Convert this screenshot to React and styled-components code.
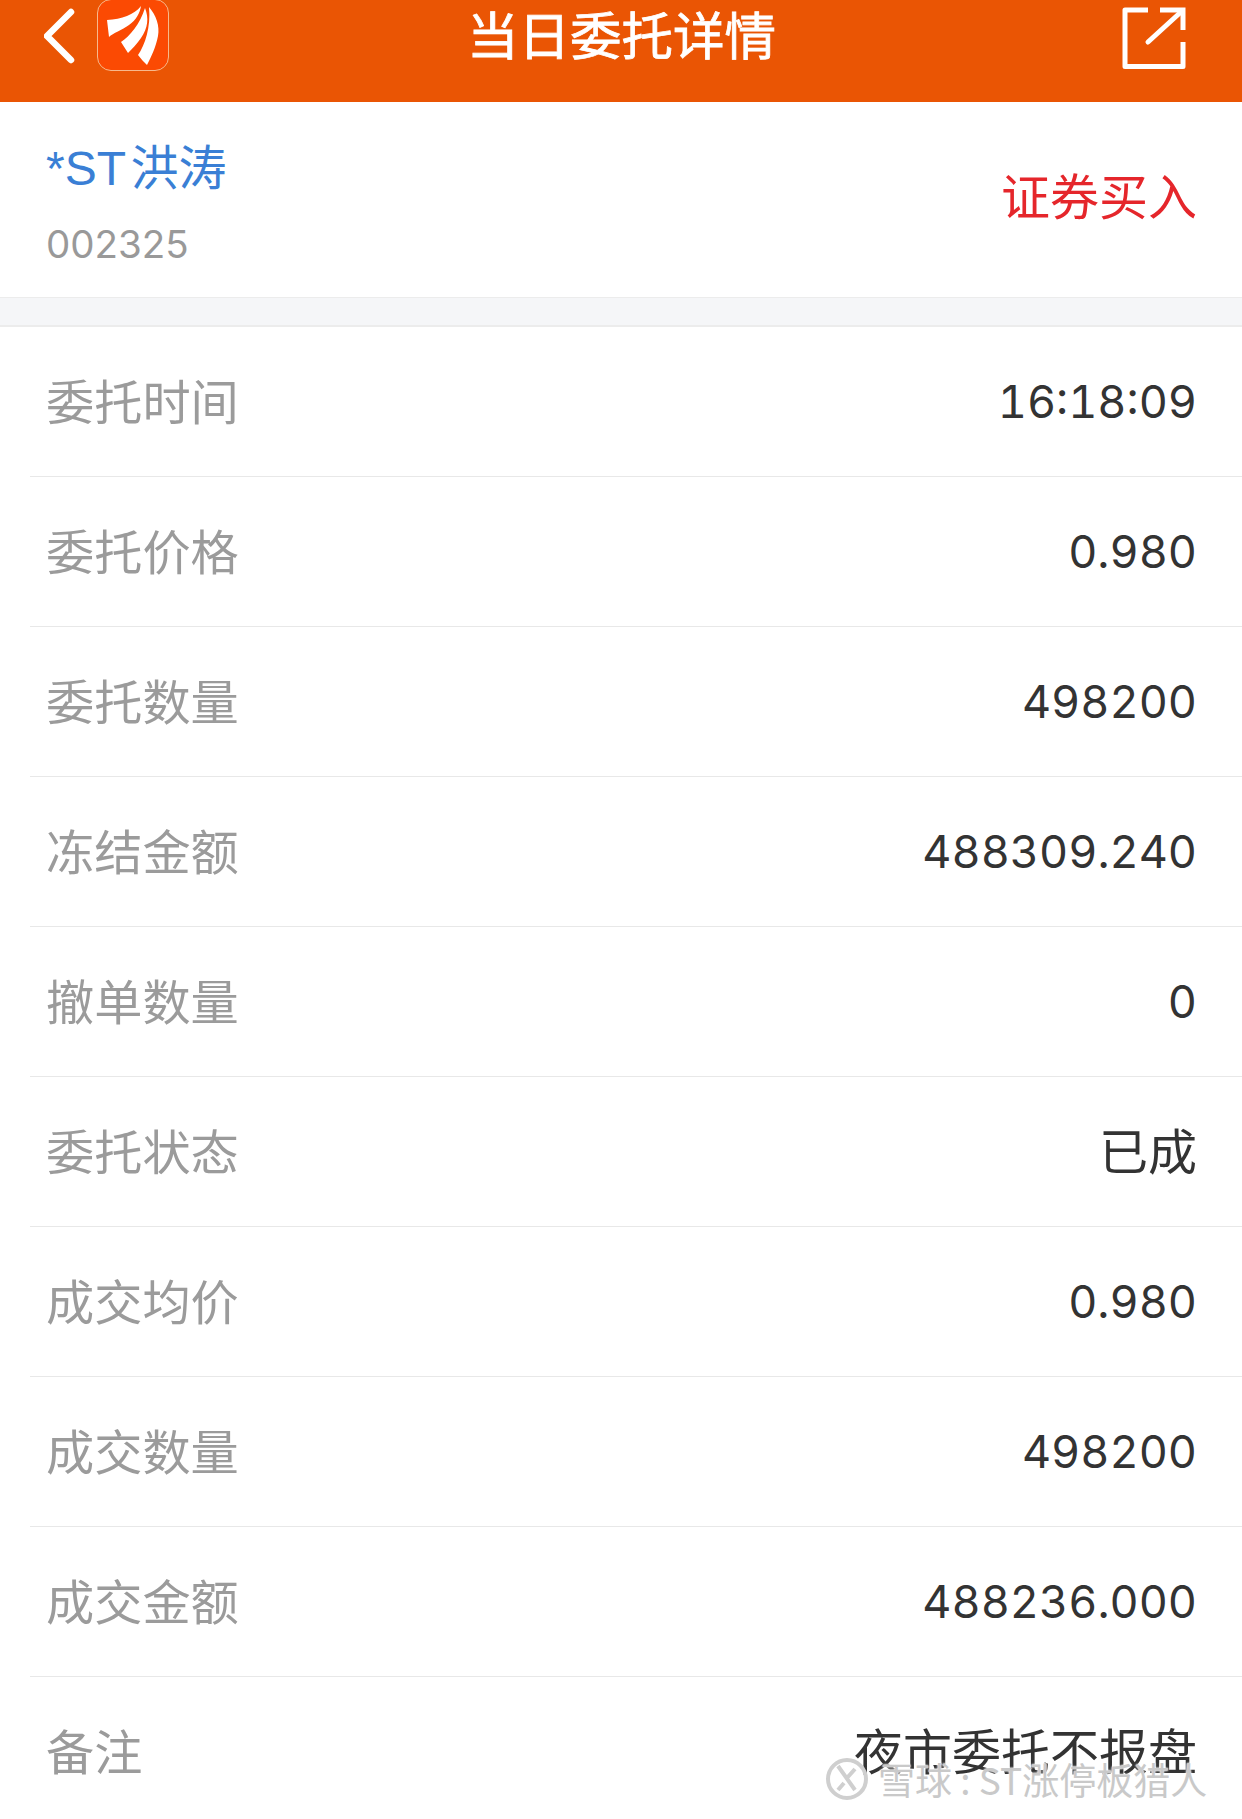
import styled, { createGlobalStyle } from 'styled-components';

const rows = [
  { label: '委托时间', value: '16:18:09' },
  { label: '委托价格', value: '0.980' },
  { label: '委托数量', value: '498200' },
  { label: '冻结金额', value: '488309.240' },
  { label: '撤单数量', value: '0' },
  { label: '委托状态', value: '已成', cjk: true },
  { label: '成交均价', value: '0.980' },
  { label: '成交数量', value: '498200' },
  { label: '成交金额', value: '488236.000' },
  { label: '备注', value: '夜市委托不报盘', cjk: true },
];

const App = () => {
  return (
    <Page>
      <GlobalStyle />
      <Header>
        <HeaderLeft>
          <svg width="32" height="56" viewBox="0 0 32 56" fill="none">
            <path d="M27 4 L3 28 L27 52" stroke="#fff" strokeWidth="6.5" strokeLinecap="round" strokeLinejoin="round" />
          </svg>
          <AppLogo>
            <svg width="70" height="70" viewBox="0 0 70 70">
              <path d="M9 20 C24 19 36 15 43 6 C42 13 38 20 31 25 C24 30 15 33 11 37 Z" fill="#fff" />
              <path d="M23 42 C32 36 42 24 47 8 C51 18 50 28 43 38 C39 44 34 49 30 53 Z" fill="#fff" />
              <path d="M40 55 C47 45 53 27 51 7 C58 15 62 26 60 36 C58 47 53 57 49 65 C46 62 43 59 40 55 Z" fill="#fff" />
            </svg>
          </AppLogo>
        </HeaderLeft>
        <Title>当日委托详情</Title>
        <ShareIcon>
          <svg width="66" height="68" viewBox="0 0 66 68" fill="none" stroke="#fff" strokeWidth="5">
            <path d="M26 9 H3 V65.5 H61 V41" strokeLinejoin="round" />
            <path d="M38 9 H61 V29" />
            <path d="M26 41 L60 10" strokeLinecap="round" />
          </svg>
        </ShareIcon>
      </Header>

      <StockBlock>
        <StockInfo>
          <StockName>*ST 洪涛</StockName>
          <StockCode>002325</StockCode>
        </StockInfo>
        <TradeType>证券买入</TradeType>
      </StockBlock>

      <Gap />

      <List>
        {rows.map((row) => (
          <Row key={row.label}>
            <Label>{row.label}</Label>
            <Value $cjk={row.cjk}>{row.value}</Value>
          </Row>
        ))}
      </List>

      <Watermark>
        <svg width="46" height="46" viewBox="0 0 46 46" fill="none" stroke="#cfcfcf" strokeWidth="4">
          <circle cx="23" cy="23" r="19" />
          <path d="M14 10 L31 34 M31 13 L22 23 M14 34 L20 27" />
        </svg>
        <span>雪球 : ST涨停板猎人</span>
      </Watermark>
    </Page>
  );
};

export default App;

const GlobalStyle = createGlobalStyle`
  html, body {
    margin: 0;
    padding: 0;
    background: #fff;
  }
`;

const Page = styled.div`
  position: relative;
  width: 1242px;
  height: 1819px;
  overflow: hidden;
  background: #fff;
  font-family: Inter, "Noto Sans CJK SC", sans-serif;
`;

const Header = styled.header`
  position: relative;
  box-sizing: border-box;
  height: 102px;
  padding: 0 54px 0 44px;
  display: flex;
  align-items: flex-start;
  justify-content: space-between;
  background: #ea5504;
`;

const HeaderLeft = styled.div`
  display: flex;
  align-items: flex-start;
  gap: 21px;
  padding-top: 8px;
`;

const AppLogo = styled.div`
  box-sizing: border-box;
  width: 72px;
  height: 72px;
  margin-top: -9px;
  border: 1px solid #f7b98c;
  border-radius: 14px;
  background: #fb4a03;
  overflow: hidden;

  svg {
    display: block;
  }
`;

const Title = styled.h1`
  position: absolute;
  left: 467px;
  top: 0;
  margin: 0;
  font-size: 51.5px;
  line-height: 66px;
  font-weight: 400;
  color: #fff;
  -webkit-text-stroke: 0.8px #fff;
  font-family: "Noto Sans CJK SC", sans-serif;
`;

const ShareIcon = styled.div`
  padding-top: 1px;

  svg {
    display: block;
  }
`;

const StockBlock = styled.section`
  box-sizing: border-box;
  height: 195px;
  padding: 0 45px 0 46px;
  display: flex;
  align-items: center;
  justify-content: space-between;
`;

const StockInfo = styled.div`
  padding-top: 8px;
  display: flex;
  flex-direction: column;
  gap: 24px;
`;

const StockName = styled.div`
  font-family: "Liberation Sans", "Noto Sans CJK SC", sans-serif;
  font-size: 48px;
  line-height: 56px;
  word-spacing: -8px;
  color: #3a7fd5;
`;

const StockCode = styled.div`
  font-size: 38.5px;
  line-height: 46px;
  color: #999;
`;

const TradeType = styled.div`
  padding-bottom: 12px;
  font-size: 49px;
  line-height: 56px;
  color: #e5262b;
  font-family: "Noto Sans CJK SC", sans-serif;
`;

const Gap = styled.div`
  box-sizing: border-box;
  height: 30px;
  background: #f5f6f8;
  border-top: 1px solid #ececec;
  border-bottom: 2px solid #ececec;
`;

const List = styled.div`
  padding-left: 30px;
`;

const Row = styled.div`
  box-sizing: border-box;
  height: 150px;
  padding: 0 45px 0 16px;
  display: flex;
  align-items: center;
  justify-content: space-between;
  border-bottom: 1px solid #e8e8e8;
`;

const Label = styled.span`
  padding-bottom: 5px;
  font-size: 48.2px;
  color: #9b9b9b;
  font-family: "Noto Sans CJK SC", sans-serif;
`;

const Value = styled.span`
  padding-bottom: ${(props) => (props.$cjk ? '6px' : '0')};
  font-size: ${(props) => (props.$cjk ? '49px' : '45px')};
  font-variant-numeric: tabular-nums;
  color: #333;
  font-family: ${(props) => (props.$cjk ? '"Noto Sans CJK SC"' : 'Inter')}, sans-serif;
`;

const Watermark = styled.div`
  position: absolute;
  left: 824px;
  top: 1756px;
  display: flex;
  align-items: center;
  gap: 8px;
  font-size: 37px;
  line-height: 44px;
  white-space: nowrap;
  color: #c9c9c9;
  text-shadow: 0 0 2px #fff, 0 0 2px #fff;
  font-family: "Noto Sans CJK SC", sans-serif;
`;
